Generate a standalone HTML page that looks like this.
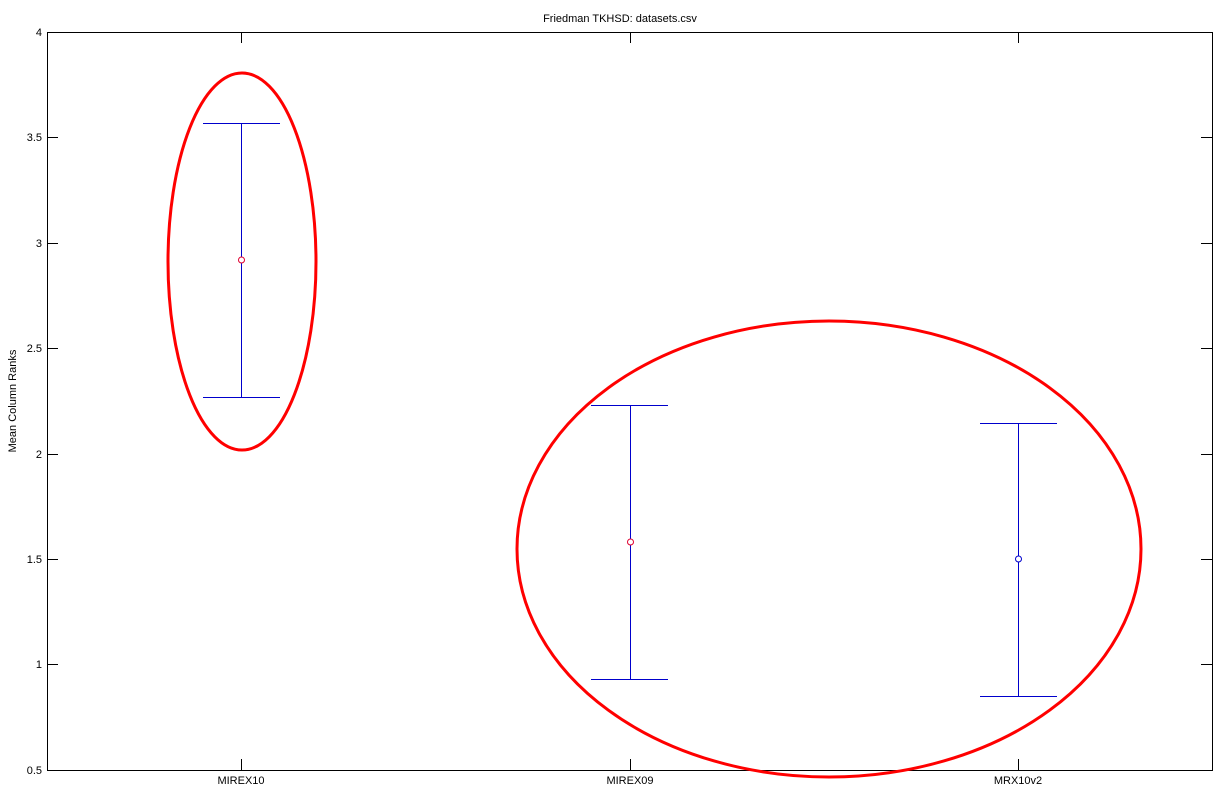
<!DOCTYPE html><html><head><style>body{margin:0;background:#fff}svg{display:block}text{font-family:"Liberation Sans",sans-serif;font-size:11px;fill:#000}</style></head><body>
<svg width="1215" height="800" viewBox="0 0 1215 800">
<text x="620" y="22" text-anchor="middle" font-size="10">Friedman TKHSD: datasets.csv</text>
<g stroke="#000" stroke-width="1" fill="none" shape-rendering="crispEdges">
<rect x="47.5" y="32.5" width="1165" height="738"/>
<path d="M47 137.5h11M47 243.5h11M47 348.5h11M47 454.5h11M47 559.5h11M47 664.5h11M1212 137.5h-11M1212 243.5h-11M1212 348.5h-11M1212 454.5h-11M1212 559.5h-11M1212 664.5h-11M241.5 32v11M630.5 32v11M1018.5 32v11M241.5 770v-11M630.5 770v-11M1018.5 770v-11"/>
</g>
<g text-anchor="end"><text x="42" y="36">4</text><text x="42" y="141">3.5</text><text x="42" y="247">3</text><text x="42" y="352">2.5</text><text x="42" y="458">2</text><text x="42" y="563">1.5</text><text x="42" y="668">1</text><text x="42" y="774">0.5</text></g>
<g text-anchor="middle"><text x="241" y="784">MIREX10</text><text x="630" y="784">MIREX09</text><text x="1018" y="784">MRX10v2</text></g>
<text transform="translate(16,401) rotate(-90)" text-anchor="middle" font-size="10">Mean Column Ranks</text>
<g stroke="#0000cc" stroke-width="1" fill="none" shape-rendering="crispEdges">
<path d="M203 123.5h77M241.5 123v274M203 397.5h77"/>
<path d="M591 405.5h77M630.5 405v274M591 679.5h77"/>
<path d="M980 423.5h77M1018.5 423v273M980 696.5h77"/>
</g>
<circle cx="241.5" cy="260" r="3" fill="#fff" stroke="#e00030"/>
<circle cx="630.5" cy="542" r="3" fill="#fff" stroke="#e00030"/>
<circle cx="1018.5" cy="559" r="3" fill="#fff" stroke="#0000cc"/>
<ellipse cx="242" cy="261.5" rx="74" ry="188.5" fill="none" stroke="#f00" stroke-width="3"/>
<ellipse cx="829" cy="549" rx="312" ry="228" fill="none" stroke="#f00" stroke-width="3"/>
</svg></body></html>
